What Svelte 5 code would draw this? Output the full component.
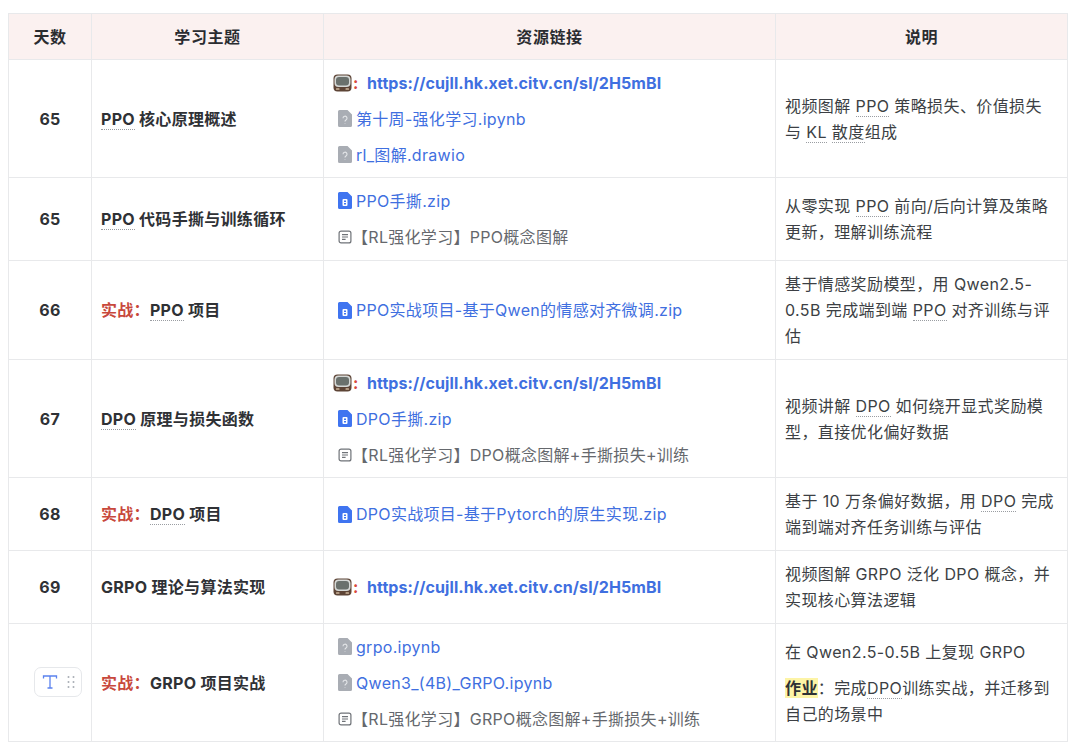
<script>
  const rows = [
    {
      day: '65',
      topic: [{ t: 'PPO', u: true }, { t: ' 核心原理概述' }],
      res: [
        { kind: 'video' },
        { kind: 'unknown', text: '第十周-强化学习.ipynb' },
        { kind: 'unknown', text: 'rl_图解.drawio' }
      ],
      desc: [[{ t: '视频图解 ' }, { t: 'PPO', u: true }, { t: ' 策略损失、价值损失与 ' }, { t: 'KL', u: true }, { t: ' ' }, { t: '散度', u: true }, { t: '组成' }]]
    },
    {
      day: '65',
      topic: [{ t: 'PPO', u: true }, { t: ' 代码手撕与训练循环' }],
      res: [
        { kind: 'zip', text: 'PPO手撕.zip' },
        { kind: 'doc', text: '【RL强化学习】PPO概念图解' }
      ],
      desc: [[{ t: '从零实现 ' }, { t: 'PPO', u: true }, { t: ' 前向/后向计算及策略更新，理解训练流程' }]]
    },
    {
      day: '66',
      label: '实战：',
      topic: [{ t: 'PPO', u: true }, { t: ' 项目' }],
      res: [{ kind: 'zip', text: 'PPO实战项目-基于Qwen的情感对齐微调.zip' }],
      desc: [[{ t: '基于情感奖励模型，用 Qwen2.5-0.5B 完成端到端 ' }, { t: 'PPO', u: true }, { t: ' 对齐训练与评估' }]]
    },
    {
      day: '67',
      topic: [{ t: 'DPO', u: true }, { t: ' 原理与损失函数' }],
      res: [
        { kind: 'video' },
        { kind: 'zip', text: 'DPO手撕.zip' },
        { kind: 'doc', text: '【RL强化学习】DPO概念图解+手撕损失+训练' }
      ],
      desc: [[{ t: '视频讲解 ' }, { t: 'DPO', u: true }, { t: ' 如何绕开显式奖励模型，直接优化偏好数据' }]]
    },
    {
      day: '68',
      label: '实战：',
      topic: [{ t: 'DPO', u: true }, { t: ' 项目' }],
      res: [{ kind: 'zip', text: 'DPO实战项目-基于Pytorch的原生实现.zip' }],
      desc: [[{ t: '基于 10 万条偏好数据，用 ' }, { t: 'DPO', u: true }, { t: ' 完成端到端对齐任务训练与评估' }]]
    },
    {
      day: '69',
      topic: [{ t: 'GRPO 理论与算法实现' }],
      res: [{ kind: 'video' }],
      desc: [[{ t: '视频图解 GRPO 泛化 DPO 概念，并实现核心算法逻辑' }]]
    },
    {
      day: '',
      widget: true,
      label: '实战：',
      topic: [{ t: 'GRPO 项目实战' }],
      res: [
        { kind: 'unknown', text: 'grpo.ipynb' },
        { kind: 'unknown', text: 'Qwen3_(4B)_GRPO.ipynb' },
        { kind: 'doc', text: '【RL强化学习】GRPO概念图解+手撕损失+训练' }
      ],
      desc: [
        [{ t: '在 Qwen2.5-0.5B 上复现 GRPO' }],
        [{ t: '作业', mark: true }, { t: '：完成' }, { t: 'DPO', u: true }, { t: '训练实战，并迁移到自己的场景中' }]
      ]
    }
  ];

  const videoUrl = 'https://cujll.hk.xet.citv.cn/sl/2H5mBI';
</script>

{#snippet inline(parts)}
  {#each parts as p}
    {#if p.u}<span class="dotted">{p.t}</span>{:else if p.mark}<strong class="mark">{p.t}</strong>{:else}{p.t}{/if}
  {/each}
{/snippet}

<main class="page">
  <table>
    <colgroup>
      <col class="c-day" />
      <col class="c-topic" />
      <col class="c-res" />
      <col class="c-desc" />
    </colgroup>
    <thead>
      <tr>
        <th>天数</th>
        <th>学习主题</th>
        <th>资源链接</th>
        <th>说明</th>
      </tr>
    </thead>
    <tbody>
      {#each rows as row}
        <tr>
          <td class="day">
            {row.day}
            {#if row.widget}
              <div class="block-handle">
                <svg width="16" height="16" viewBox="0 0 16 16" fill="none" stroke="#5b82ee" stroke-width="1.3">
                  <path d="M1.5 4.5V2h13v2.5M8 2v12M5.5 14h5" />
                </svg>
                <svg width="8" height="14" viewBox="0 0 8 14" fill="#a9adb5">
                  <circle cx="1.5" cy="2" r="1" /><circle cx="6.5" cy="2" r="1" />
                  <circle cx="1.5" cy="7" r="1" /><circle cx="6.5" cy="7" r="1" />
                  <circle cx="1.5" cy="12" r="1" /><circle cx="6.5" cy="12" r="1" />
                </svg>
              </div>
            {/if}
          </td>
          <td class="topic">
            {#if row.label}<span class="label">{row.label}</span>{/if}{@render inline(row.topic)}
          </td>
          <td class="res">
            {#each row.res as r}
              {#if r.kind === 'video'}
                <p class="line video">
                  <svg class="tv" width="19" height="18" viewBox="0 0 19 18">
                    <rect x="0.5" y="0.5" width="18" height="17" rx="4" fill="#5d4436" />
                    <rect x="1.5" y="1.5" width="16" height="11.5" rx="4" fill="#d5d8d6" />
                    <rect x="3" y="3" width="13" height="8.5" rx="3" fill="#6a716d" />
                    <rect x="3" y="14.2" width="3.5" height="1.6" rx="0.5" fill="#cdb59b" />
                    <rect x="12.5" y="14.2" width="3.5" height="1.6" rx="0.5" fill="#cdb59b" />
                  </svg>
                  <span class="colon">:</span>
                  <span class="url">{videoUrl}</span>
                </p>
              {:else if r.kind === 'doc'}
                <p class="line doc">
                  <svg class="ico-doc" width="14" height="14" viewBox="0 0 14 14" fill="none" stroke="#6f7378" stroke-width="1.2">
                    <rect x="1.1" y="1.1" width="11.8" height="11.8" rx="2" />
                    <path d="M4 4.6h6M4 7h6M4 9.4h3.6" />
                  </svg>
                  <span>{r.text}</span>
                </p>
              {:else}
                <p class="line file">
                  <svg class="ico-file" width="14" height="17" viewBox="0 0 14 17">
                    <path d="M1.5 0H9.5L14 4.5V15.5A1.5 1.5 0 0 1 12.5 17H1.5A1.5 1.5 0 0 1 0 15.5V1.5A1.5 1.5 0 0 1 1.5 0Z" fill={r.kind === 'zip' ? '#3f74f0' : '#a9adb4'} />
                    {#if r.kind === 'zip'}
                      <rect x="4.5" y="7" width="5" height="7" rx="1" fill="#fff" />
                      <rect x="6" y="8.5" width="2" height="1.5" fill="#3f74f0" />
                      <rect x="6" y="11" width="2" height="1.5" fill="#3f74f0" />
                    {:else}
                      <path d="M5 8.2a2 2 0 1 1 3 1.7c-.7.4-1 .8-1 1.5M7 13v.6" fill="none" stroke="#e4e6e9" stroke-width="1.1" />
                    {/if}
                  </svg>
                  <span>{r.text}</span>
                </p>
              {/if}
            {/each}
          </td>
          <td class="desc">
            {#each row.desc as parts}
              <p class="line">{@render inline(parts)}</p>
            {/each}
          </td>
        </tr>
      {/each}
    </tbody>
  </table>
</main>

<style>
  :global(body) {
    margin: 0;
    background: #fff;
  }

  .page {
    width: 1080px;
    height: 755px;
    padding: 13px 0 0 8px;
    box-sizing: border-box;
    overflow: hidden;
    font-family: Inter, "Noto Sans CJK SC", sans-serif;
    font-size: 16px;
    line-height: 26px;
    letter-spacing: 0.3px;
    color: #3c3f44;
  }

  table {
    width: 1059px;
    table-layout: fixed;
    border-collapse: collapse;
  }

  .c-day { width: 83px; }
  .c-topic { width: 232px; }
  .c-res { width: 452px; }
  .c-desc { width: 292px; }

  th, td {
    border: 1px solid #e8e9eb;
    padding: 8px 9px;
    vertical-align: middle;
  }

  th {
    background: #fbf1f0;
    font-weight: 600;
    color: #2a2c30;
    text-align: center;
    padding: 10px 9px 9px;
    letter-spacing: 0.6px;
  }

  .day {
    position: relative;
    text-align: center;
    font-weight: 700;
    color: #2f3135;
  }

  .topic {
    font-weight: 700;
    color: #2f3135;
  }

  .res {
    padding-block: 9.5px;
  }

  tbody tr:nth-child(2) .res {
    padding-bottom: 10.5px;
  }

  .desc {
    padding: 10px 12px 10px 9px;
    letter-spacing: 0.4px;
  }

  .label {
    color: #c8483c;
  }

  .line {
    margin: 0;
  }

  .line + .line {
    margin-top: 10px;
  }

  .file {
    color: #3f6fe0;
    display: flex;
    align-items: center;
    gap: 4px;
    padding-left: 5px;
  }

  .doc {
    color: #65686d;
    display: flex;
    align-items: center;
    gap: 0;
    padding-left: 5px;
  }

  .video {
    display: flex;
    align-items: center;
    font-weight: 700;
    color: #3f6fe0;
  }

  .url {
    letter-spacing: 0.08px;
  }

  .colon {
    color: #d8483c;
    margin-left: 1px;
    width: 14px;
  }

  .dotted {
    border-bottom: 1px dotted #9a9da2;
  }

  .mark {
    background: #fdf4a6;
    font-weight: 700;
    color: #2f3135;
  }

  .block-handle {
    position: absolute;
    left: 25px;
    top: 43px;
    width: 48px;
    height: 30px;
    box-sizing: border-box;
    border: 1px solid #e6e8eb;
    border-radius: 7px;
    background: #fff;
    display: flex;
    align-items: center;
    justify-content: center;
    gap: 9px;
  }
</style>
